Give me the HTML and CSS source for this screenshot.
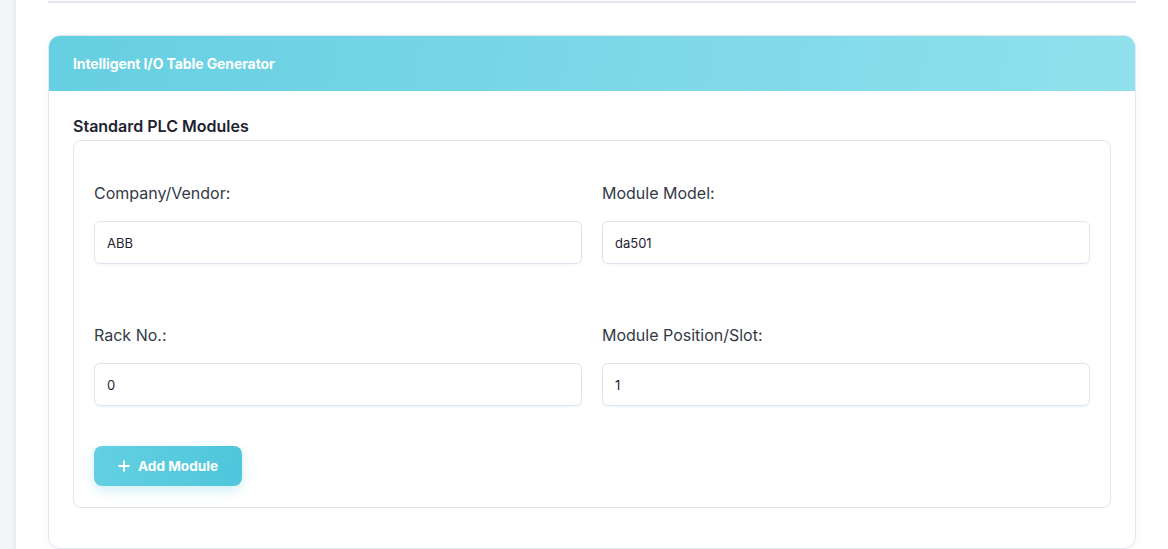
FILE: index.html
```html
<!DOCTYPE html>
<html lang="en">
<head>
<meta charset="utf-8">
<title>Intelligent I/O Table Generator</title>
<link rel="stylesheet" href="styles.css">
</head>
<body>
<div class="layout">
  <aside class="side"></aside>
  <main class="main">
    <div class="top-rule"></div>
    <section class="card">
      <header class="card-header">
        <h2 class="card-title">Intelligent I/O Table Generator</h2>
      </header>
      <div class="card-body">
        <h3 class="section-title">Standard PLC Modules</h3>
        <div class="module-box">
          <div class="form-grid">
            <div class="form-group">
              <label class="form-label">Company/Vendor:</label>
              <div class="form-input">ABB</div>
            </div>
            <div class="form-group">
              <label class="form-label">Module Model:</label>
              <div class="form-input">da501</div>
            </div>
            <div class="form-group">
              <label class="form-label">Rack No.:</label>
              <div class="form-input">0</div>
            </div>
            <div class="form-group">
              <label class="form-label">Module Position/Slot:</label>
              <div class="form-input">1</div>
            </div>
          </div>
          <button class="btn-add" type="button">
            <svg class="btn-icon" width="12" height="12" viewBox="0 0 12 12" aria-hidden="true">
              <path d="M6 0.5V11.5M0.5 6H11.5" stroke="#fff" stroke-width="2" fill="none"/>
            </svg>
            <span>Add Module</span>
          </button>
        </div>
      </div>
    </section>
  </main>
</div>
</body>
</html>
```
FILE: styles.css
```css
* { box-sizing: border-box; }
html, body {
  margin: 0;
  padding: 0;
  height: 549px;
  overflow: hidden;
  background: #ffffff;
  font-family: Inter, "Noto Sans", "Liberation Sans", sans-serif;
  color: #1f2937;
}
.layout {
  display: flex;
  height: 549px;
}
.side {
  width: 16px;
  flex: none;
  background: linear-gradient(to right, #f4f5f7 0%, #f3f4f6 70%, #e9eaee 100%);
}
.main {
  flex: 1;
  padding: 0 32px 0 32px;
}
.top-rule {
  margin-top: 1px;
  height: 2px;
  background: #e4e6ef;
}
.card {
  margin-top: 32px;
  border: 1px solid #e4e6f0;
  border-radius: 12px;
  overflow: hidden;
  background: #fff;
  box-shadow: 0 2px 8px rgba(100, 110, 140, 0.05);
}
.card-header {
  height: 55px;
  display: flex;
  align-items: center;
  padding: 0 24px;
  background: linear-gradient(100deg, #66cfe2 0%, #7fd9e8 60%, #90e1ed 100%);
}
.card-title {
  margin: 0;
  font-size: 14px;
  font-weight: 700;
  color: #ffffff;
  letter-spacing: -0.1px;
}
.card-body {
  padding: 24px 24px 40px;
}
.section-title {
  margin: 0 0 3px;
  font-size: 16px;
  line-height: 22px;
  font-weight: 600;
  color: #1f2330;
}
.module-box {
  border: 1px solid #e3e5ee;
  border-radius: 8px;
  padding: 20px 20px 21px;
}
.form-grid {
  display: grid;
  grid-template-columns: 1fr 1fr;
  column-gap: 20px;
  row-gap: 60px;
  padding-top: 21px;
  margin-bottom: 40px;
}
.form-group {
  display: flex;
  flex-direction: column;
}
.form-label {
  font-size: 16px;
  line-height: 22px;
  color: #343a46;
  margin-bottom: 17px;
}
.form-input {
  height: 43px;
  border: 1px solid #dde6ee;
  border-radius: 6px;
  padding: 0 12px;
  display: flex;
  align-items: center;
  font-size: 13px;
  color: #1f2430;
  background: #fff;
  box-shadow: 0 1px 3px rgba(120, 200, 220, 0.12);
}
.btn-add {
  display: inline-flex;
  align-items: center;
  gap: 8px;
  height: 40px;
  width: 148px;
  padding: 0 0 0 24px;
  border: none;
  border-radius: 8px;
  background: linear-gradient(100deg, #64d0e2 0%, #4ec6db 100%);
  color: #ffffff;
  font-family: Inter, "Noto Sans", "Liberation Sans", sans-serif;
  font-size: 13.6px;
  font-weight: 700;
  box-shadow: 0 4px 12px rgba(78, 198, 219, 0.28);
}
.btn-icon { flex: none; }
```
